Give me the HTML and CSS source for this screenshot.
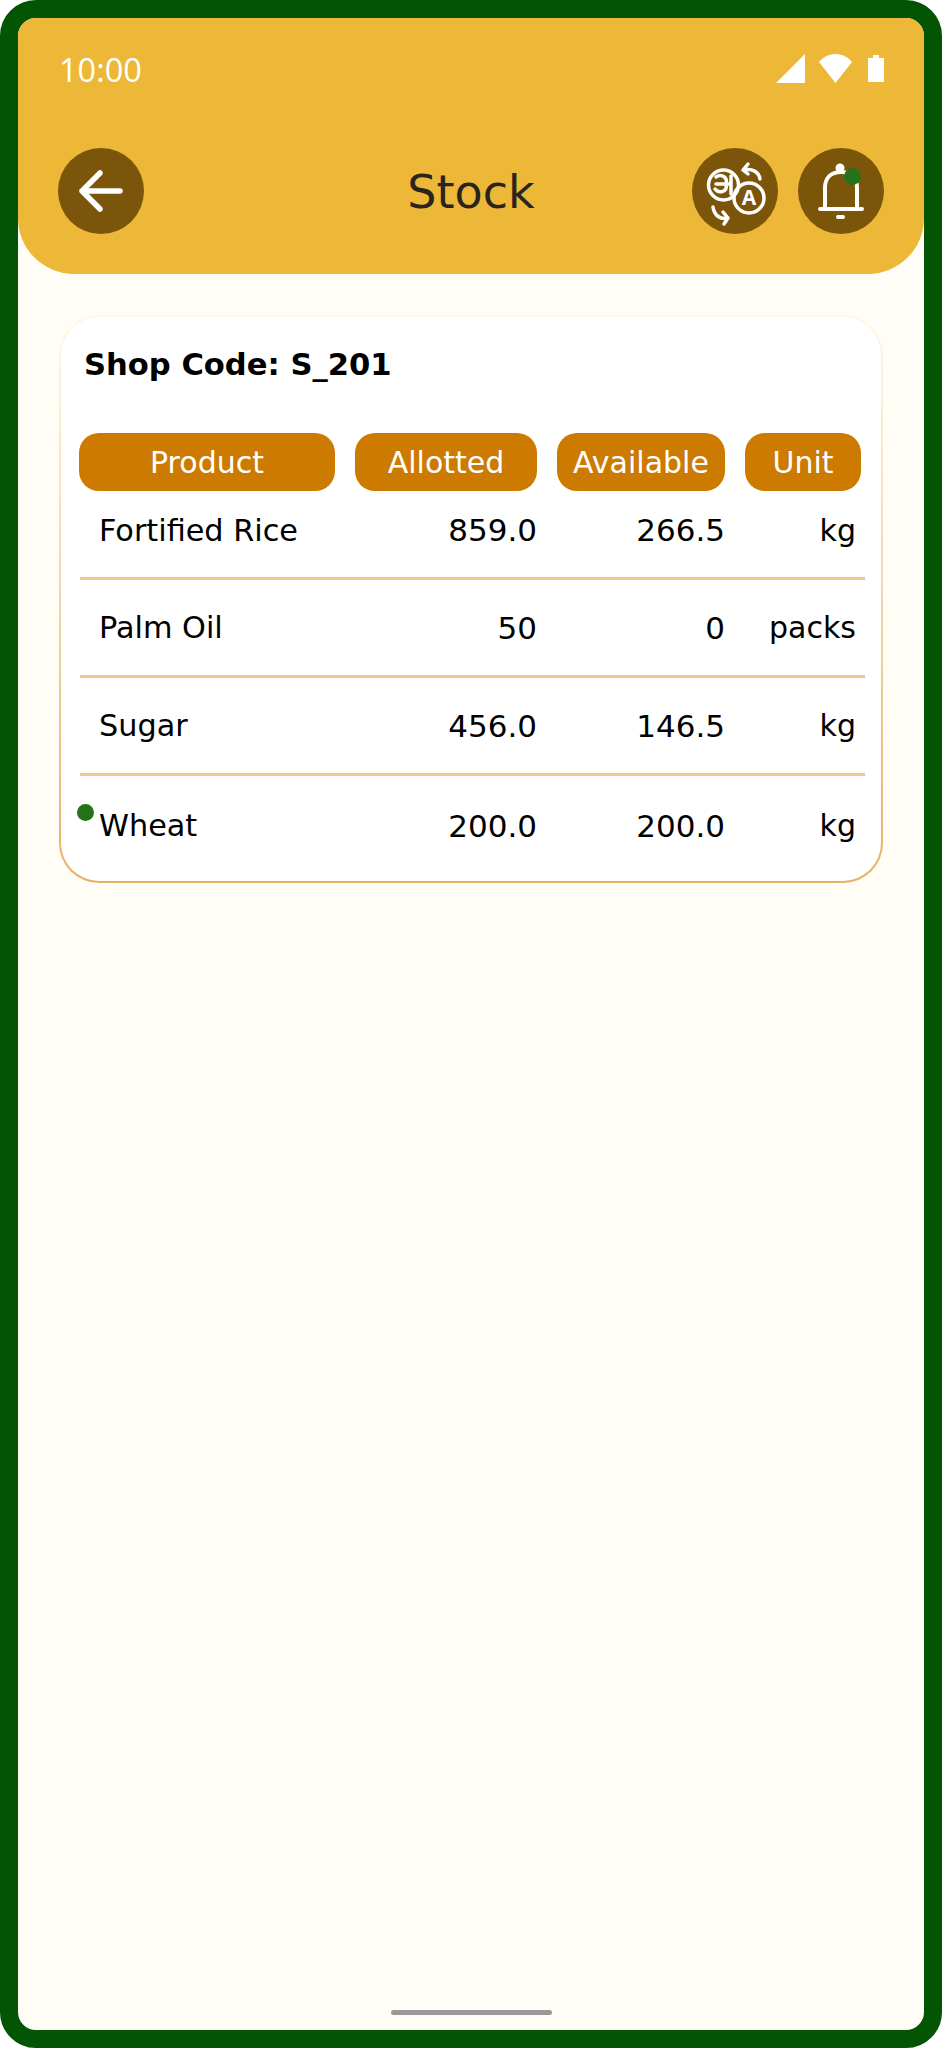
FILE: index.html
```html
<!DOCTYPE html>
<html lang="en">
<head>
    <meta charset="UTF-8">
    <meta name="viewport" content="width=device-width, initial-scale=1.0">
    <title>Stock</title>
    <link rel="stylesheet" href="styles.css">
</head>
<body>
    <div class="phone">
        <div class="top-bar">
            <div class="status-bar">
                <span class="time">10:00</span>
                <div class="status-icons">
                    <svg class="signal" width="29" height="29" viewBox="0 0 29 29"><path d="M29 0V29H0Z"/></svg>
                    <svg class="wifi" width="33" height="29" viewBox="0 0 33 29"><path d="M0 8C9-2.700 24-2.700 33 8L16.500 29Z"/></svg>
                    <svg class="battery" width="16" height="27" viewBox="0 0 16 27"><path d="M5 0H11V3H16V27H0V3H5Z"/></svg>
                </div>
            </div>
            <div class="nav-bar">
                <button class="round-button">
                    <svg width="86" height="86" viewBox="0 0 86 86"><path class="line-icon" d="M24 43H62M42 25L24 43L42 61"/></svg>
                </button>
                <h1 class="page-title">Stock</h1>
                <div class="nav-actions">
                    <button class="round-button">
                        <svg width="86" height="86" viewBox="0 0 86 86">
                            <circle class="thin-icon" cx="31.500" cy="37" r="15"/>
                            <circle class="thin-icon" cx="57" cy="50" r="15"/>
                            <path class="thin-icon" d="M39 28V46M24 36H39M24 29C30 25 36 30 34 36C36 44 27 46 23 41"/>
                            <text class="lang-letter" x="57" y="57">A</text>
                            <path class="thin-icon" d="M68 31C67 24 60 20 52 22M56 16L51 22L56 26"/>
                            <path class="thin-icon" d="M21 59C22 67 28 72 36 70M31 64L36 70L32 76"/>
                        </svg>
                    </button>
                    <button class="round-button bell-button">
                        <svg width="86" height="86" viewBox="0 0 86 86">
                            <path class="bell-line" d="M27 61V40C27 30 33 24 43 24C53 24 59 30 59 40V61M22 61H64"/>
                            <circle class="bell-knob" cx="42" cy="20" r="4.500"/>
                            <rect class="bell-knob" x="38" y="67" width="9" height="4" rx="2"/>
                        </svg>
                        <span class="green-dot bell-dot"></span>
                    </button>
                </div>
            </div>
        </div>

        <div class="stock-card">
            <div class="shop-code">Shop Code: S_201</div>
            <div class="stock-head">
                <div class="head-cell">Product</div>
                <div class="head-cell">Allotted</div>
                <div class="head-cell">Available</div>
                <div class="head-cell">Unit</div>
            </div>
            <div class="stock-row first-row">
                <div class="product-name">Fortified Rice</div>
                <div class="amount">859.0</div>
                <div class="amount">266.5</div>
                <div class="unit">kg</div>
            </div>
            <div class="stock-row">
                <div class="product-name">Palm Oil</div>
                <div class="amount">50</div>
                <div class="amount">0</div>
                <div class="unit">packs</div>
            </div>
            <div class="stock-row">
                <div class="product-name">Sugar</div>
                <div class="amount">456.0</div>
                <div class="amount">146.5</div>
                <div class="unit">kg</div>
            </div>
            <div class="stock-row last-row">
                <span class="green-dot row-dot"></span>
                <div class="product-name">Wheat</div>
                <div class="amount">200.0</div>
                <div class="amount">200.0</div>
                <div class="unit">kg</div>
            </div>
        </div>

        <div class="home-bar"></div>
    </div>
</body>
</html>
```

FILE: styles.css
```css
* {
    box-sizing: border-box;
}
body {
    margin: 0;
    background: white;
    font-family: 'DejaVu Sans', sans-serif;
}
.phone {
    position: relative;
    height: 2048px;
    border: 18px solid #035403;
    border-radius: 36px;
    background-color: #fffdf6;
    overflow: hidden;
}
.top-bar {
    height: 256px;
    padding: 0 40px;
    background-color: #edb738;
    border-bottom-left-radius: 56px;
    border-bottom-right-radius: 56px;
}
.status-bar {
    display: flex;
    justify-content: space-between;
    align-items: center;
    height: 102px;
}
.time {
    margin-left: 1px;
    font-family: 'Open Sans', sans-serif;
    font-size: 32.500px;
    color: white;
}
.status-icons {
    display: flex;
    align-items: center;
    gap: 14px;
    margin-top: -2px;
}
.status-icons svg {
    fill: white;
}
.wifi {
    margin-right: 2px;
}
.nav-bar {
    display: flex;
    align-items: center;
    position: relative;
    margin-top: 28px;
}
.page-title {
    position: absolute;
    left: 0;
    right: 0;
    margin: 0;
    padding-top: 2px;
    text-align: center;
    font-size: 46px;
    font-weight: normal;
    color: #2a241c;
    pointer-events: none;
}
.nav-actions {
    display: flex;
    gap: 20px;
    margin-left: auto;
}
.round-button {
    position: relative;
    width: 86px;
    height: 86px;
    padding: 0;
    border: none;
    border-radius: 50%;
    background-color: #7b5509;
    cursor: pointer;
}
.round-button svg {
    display: block;
}
.line-icon {
    fill: none;
    stroke: white;
    stroke-width: 5.500;
    stroke-linecap: round;
    stroke-linejoin: round;
}
.thin-icon {
    fill: none;
    stroke: white;
    stroke-width: 3.500;
    stroke-linecap: round;
    stroke-linejoin: round;
}
.bell-line {
    fill: none;
    stroke: white;
    stroke-width: 4;
    stroke-linecap: round;
}
.lang-letter {
    fill: white;
    font-family: 'Open Sans', sans-serif;
    font-size: 21px;
    font-weight: bold;
    text-anchor: middle;
}
.bell-knob {
    fill: white;
}
.green-dot {
    position: absolute;
    width: 17px;
    height: 17px;
    border-radius: 50%;
    background-color: #257319;
}
.bell-dot {
    top: 20px;
    left: 46px;
}
.stock-card {
    width: 824px;
    height: 568px;
    margin: 41px 0 0 41px;
    padding: 0 18px;
    border: 2px solid transparent;
    border-radius: 40px;
    background:
        linear-gradient(white, white) padding-box,
        linear-gradient(#fff8ea, #e8b166) border-box;
}
.shop-code {
    padding: 29px 5px 0;
    font-size: 30.600px;
    font-weight: bold;
    color: #000;
    line-height: 38px;
}
.stock-head,
.stock-row {
    display: grid;
    grid-template-columns: 256px 182px 168px 116px;
    column-gap: 20px;
}
.stock-head {
    margin-top: 49px;
}
.head-cell {
    height: 58px;
    line-height: 59px;
    border-radius: 20px;
    background-color: #cc7a00;
    color: white;
    font-size: 30px;
    text-align: center;
}
.stock-row {
    position: relative;
    align-items: center;
    height: 98px;
    margin: 0 -2px 0 1px;
    padding: 0 2px 0 0;
    border-bottom: 3px solid #efc78f;
    font-size: 31px;
    color: #000;
}
.first-row {
    height: 89px;
    padding-bottom: 8px;
}
.last-row {
    height: 100px;
    padding-bottom: 1px;
    border-bottom: none;
}
.product-name {
    margin-left: -1px;
    padding-left: 20px;
    font-size: 30.300px;
}
.amount {
    text-align: right;
    margin-right: 1px;
}
.unit {
    text-align: right;
    padding-right: 6px;
    font-size: 30px;
}
.row-dot {
    top: 28px;
    left: -3px;
}
.home-bar {
    position: absolute;
    left: 373px;
    bottom: 15px;
    width: 161px;
    height: 5px;
    border-radius: 3px;
    background-color: #999;
}
```
